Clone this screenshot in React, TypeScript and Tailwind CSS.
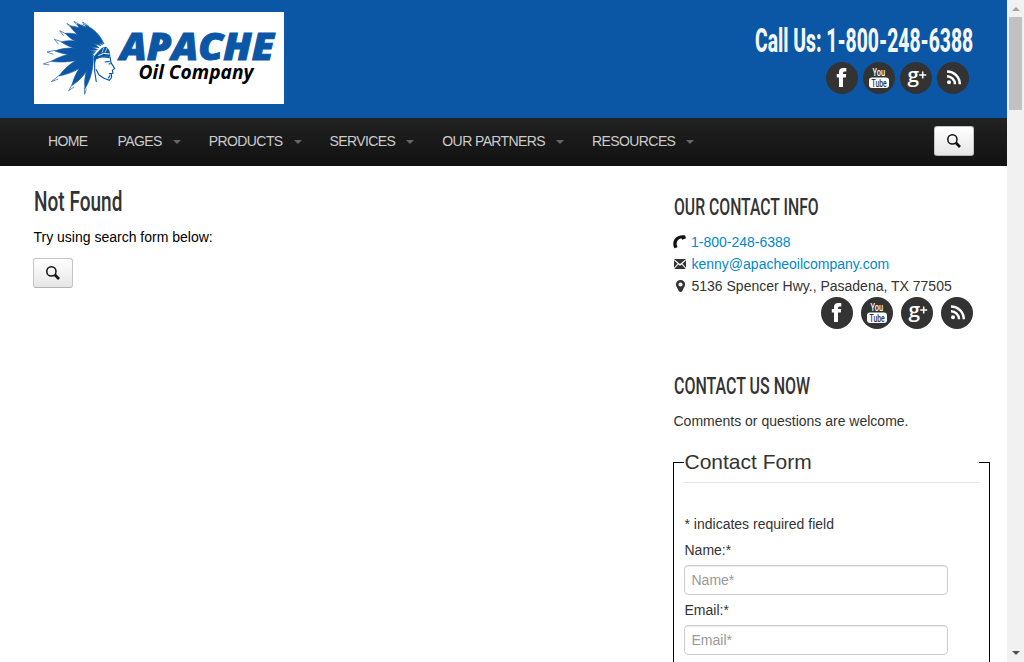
import React from "react";

const navItems = [
  { label: "HOME", menu: false },
  { label: "PAGES", menu: true },
  { label: "PRODUCTS", menu: true },
  { label: "SERVICES", menu: true },
  { label: "OUR PARTNERS", menu: true },
  { label: "RESOURCES", menu: true },
];

function Logo() {
  return (
    <svg className="block h-[92px] w-[250px] bg-white" viewBox="0 0 250 92" role="img" aria-label="Apache Oil Company">
      <g transform="translate(-4 -4) scale(.33333)" fill="#0b57a5">
        <g stroke="#0b57a5" strokeWidth="2">
          <path d="M222 108C211 82 190 60 164 50C176 72 198 94 222 108Z" />
          <path d="M218 110C197 75 170 53 141 48C153 74 186 98 218 110Z" />
          <path d="M213 113C181 74 153 55 120 54C135 80 173 104 213 113Z" />
          <path d="M207 119C171 86 139 73 106 76C124 99 165 118 207 119Z" />
          <path d="M203 126C163 101 125 92 94 102C120 121 164 131 203 126Z" />
          <path d="M198 132C151 119 108 115 75 129C109 143 157 145 198 132Z" />
          <path d="M194 137C147 129 99 138 64 160C105 166 157 158 194 137Z" />
          <path d="M191 142C149 145 112 169 87 204C129 196 169 175 191 142Z" />
          <path d="M190 145C159 160 134 194 126 232C157 214 180 181 190 145Z" />
          <path d="M190 150C171 178 160 207 165 242C181 216 190 183 190 150Z" />
        </g>
        <path d="M191 146C216 118 222 112 232 119C239 125 241 135 241 145L236 147C221 143 210 145 199 153L193 170Z" />
        <g fill="none" stroke="#0b57a5" strokeWidth="2">
          <path d="M162 52L158 42L177 55M140 50L132 40L149 50M121 56L110 46L126 56M107 77L89 68L101 83M95 101L73 94L86 109M76 127L51 132L70 139M65 159L40 168L58 171M89 201L64 221L85 213M127 228L116 248L132 237M163 239L164 259L169 242" />
          <path d="M240 146L243 164L254 181L247 187L249 195L244 198L245 208L238 217L222 211L207 201L198 184M194 151L194 190L199 222M237 197L247 197M224 162L239 160M236 168L242 167M241 202L234 211" strokeWidth="3.4" />
          <path d="M199 153Q208 142 239 149" strokeWidth="4" />
        </g>
        <g fill="none" stroke="#fff" strokeWidth="3">
          <path d="M191 141Q213 112 231 112M205 143Q219 132 239 138" />
          <path d="M216 134L222 118M225 134L231 120" strokeWidth="2" />
        </g>
      </g>
      <text x="86" y="48" textLength="154" lengthAdjust="spacingAndGlyphs" fontFamily="'Open Sans', sans-serif" fontSize="37" fontWeight="800" fontStyle="italic" fill="#0b57a5" stroke="#0b57a5" strokeWidth="1">APACHE</text>
      <text x="104.5" y="66.5" textLength="115" lengthAdjust="spacingAndGlyphs" fontFamily="'Open Sans', sans-serif" fontSize="20" fontWeight="700" fontStyle="italic" fill="#000">Oil Company</text>
    </svg>
  );
}

function Facebook() {
  return (
    <svg className="size-8" viewBox="0 0 32 32" aria-label="Facebook">
      <circle cx="16" cy="16" r="16" fill="#333" />
      <path fill="#fff" d="M13 25V15.5H10.8V12H13V10Q13 6 17.3 6H20.3V9.5H18.3Q17 9.5 17 11V12H20.2L19.8 15.5H17V25Z" />
    </svg>
  );
}

function YouTube() {
  return (
    <svg className="size-8 overflow-visible" viewBox="0 0 32 32" aria-label="YouTube">
      <circle cx="16" cy="16" r="16" fill="#333" />
      <text x="9.5" y="13.6" textLength="12.5" lengthAdjust="spacingAndGlyphs" fontFamily="Roboto, sans-serif" fontSize="10" fontWeight="500" fill="#fff">You</text>
      <rect x="6" y="15.5" width="20" height="10.5" rx="3" fill="#fff" />
      <text x="8.5" y="24.7" textLength="15.2" lengthAdjust="spacingAndGlyphs" fontFamily="Roboto, sans-serif" fontSize="10.5" fontWeight="500" fill="#333">Tube</text>
    </svg>
  );
}

function GooglePlus() {
  return (
    <svg className="size-8 overflow-visible" viewBox="0 0 32 32" aria-label="Google Plus">
      <circle cx="16" cy="16" r="16" fill="#333" />
      <text x="7.5" y="19.5" textLength="11.5" lengthAdjust="spacingAndGlyphs" fontFamily="'Open Sans', sans-serif" fontSize="19.5" fontWeight="600" fill="#fff">g</text>
      <path d="M22.7 9.5V16.5M19.2 13H26.2" stroke="#fff" strokeWidth="1.5" />
    </svg>
  );
}

function Rss() {
  return (
    <svg className="size-8" viewBox="0 0 32 32" aria-label="RSS">
      <circle cx="16" cy="16" r="16" fill="#333" />
      <circle cx="12" cy="20.2" r="2" fill="#fff" />
      <path d="M10 14.2A8 8 0 0 1 18 22.2M10 9.4A12.8 12.8 0 0 1 22.8 22.2" fill="none" stroke="#fff" strokeWidth="2.5" />
    </svg>
  );
}

function Social({ className }: { className: string }) {
  return (
    <div className={"flex justify-end " + className}>
      <Facebook />
      <YouTube />
      <GooglePlus />
      <Rss />
    </div>
  );
}

function SearchButton() {
  return (
    <button aria-label="Search" className="flex h-[30px] w-10 items-center justify-center rounded-[3px] border border-[#c5c5c5] border-b-[#b3b3b3] bg-linear-to-b from-white to-[#e6e6e6]">
      <svg className="size-[14px]" viewBox="0 0 14 14" fill="none" stroke="#111">
        <circle cx="5.4" cy="5.4" r="4.6" strokeWidth="1.5" />
        <path d="M8.8 8.8L13 13" strokeWidth="2.7" />
      </svg>
    </button>
  );
}

function Field({ label, hint }: { label: string; hint: string }) {
  return (
    <label className="mb-[5px] block">
      <span className="mb-[5px] block pl-[0.5px]">{label}</span>
      <input placeholder={hint} className="block h-[30px] w-[264px] rounded border border-[#ccc] px-[6.5px] text-sm shadow-[inset_0_1px_1px_rgba(0,0,0,.075)] placeholder:text-[#999]" />
    </label>
  );
}

export default function App() {
  return (
    <div className="flex h-[662px] w-full overflow-hidden bg-white font-['Liberation_Sans',Arial,sans-serif] text-sm leading-5 text-[#333]">
      <div className="w-[1007px] shrink-0">
        <header className="flex h-[118px] justify-between bg-[#0b57a5] pt-3 pr-[33px] pl-[34px]">
          <Logo />
          <div className="flex flex-col items-end">
            <div className="flex h-[50px] w-[219px] items-center pt-[6px]">
              <span className="block origin-left scale-x-[0.568] font-[Roboto] text-[34px] leading-[50px] font-extrabold whitespace-nowrap text-[#f5f5f5]">Call Us: 1-800-248-6388</span>
            </div>
            <Social className="gap-[5px] pr-[5px]" />
          </div>
        </header>
        <nav className="flex h-12 items-center justify-between bg-linear-to-b from-[#222] to-[#111] pr-[33px] pb-[2px] pl-[33px]">
          <ul className="flex text-[14px] tracking-[-0.6px] text-[#ccc]">
            {navItems.map((item) => (
              <li key={item.label} className="flex h-5 items-center px-[15px]">
                <span>{item.label}</span>
                {item.menu && <span className="mt-[2px] -mr-[2px] ml-[11px] border-x-4 border-t-4 border-x-transparent border-t-[#666]" />}
              </li>
            ))}
          </ul>
          <SearchButton />
        </nav>
        <div className="flex pl-[33px]">
          <main className="w-[640px] pt-4">
            <h1 className="flex h-10 items-center pl-px">
              <span className="origin-left scale-x-[0.68] font-[Roboto] text-[28px] font-medium whitespace-nowrap">Not Found</span>
            </h1>
            <p className="mt-[5px] mb-[11px] pl-[0.5px] text-black">Try using search form below:</p>
            <SearchButton />
          </main>
          <aside className="w-[317px] pt-5">
            <h2 className="flex h-10 items-center pt-[3px] pl-[0.5px]">
              <span className="origin-left scale-x-[0.685] font-[Roboto] text-[23px] font-medium whitespace-nowrap">OUR CONTACT INFO</span>
            </h2>
            <ul className="mt-[5px] leading-[22px]">
              <li className="flex items-center text-[#08c]">
                <svg className="mr-1 h-[14px] w-[14px] shrink-0" viewBox="0 0 14 14"><path fill="#111" d="M4.5 12.2L1.4 13.3C-.5 9.8 0 5.5 2.8 2.8C5.2.4 8.8-.3 12.2.5L13 3.3L9.3 4.7L8.2 3.3C5.3 3.7 3.4 6.4 3.6 9.2Z" /></svg>
                1-800-248-6388
              </li>
              <li className="flex items-center text-[#08c]">
                <svg className="mr-[4.5px] h-[14px] w-[14px] shrink-0" viewBox="0 0 14 14"><path fill="#333" d="M1 2H13L7 7ZM1 3.2L4.6 6.8L1 10.8ZM13 3.2L9.4 6.8L13 10.8ZM1.2 12L5.3 7.4L7 8.8L8.7 7.4L12.8 12Z" /></svg>
                kenny@apacheoilcompany.com
              </li>
              <li className="flex items-center">
                <svg className="mr-[4.5px] h-[14px] w-[14px] shrink-0" viewBox="0 0 14 14"><path fill="#333" fillRule="evenodd" d="M7.5 1A4.6 4.6 0 0 1 12.1 5.6C12.1 7.5 10.5 9 9.5 11.5Q7.5 14.5 5.5 11.5C4.5 9 2.9 7.5 2.9 5.6A4.6 4.6 0 0 1 7.5 1ZM7.5 3.4A2.1 2.1 0 1 0 7.5 7.6A2.1 2.1 0 1 0 7.5 3.4Z" /></svg>
                5136 Spencer Hwy., Pasadena, TX 77505
              </li>
            </ul>
            <Social className="gap-2 pr-[17px]" />
            <h2 className="mt-9 flex h-10 items-center pt-[3px] pl-[0.5px]">
              <span className="origin-left scale-x-[0.695] font-[Roboto] text-[23px] font-medium whitespace-nowrap">CONTACT US NOW</span>
            </h2>
            <p className="mt-[6px] mb-[11px] pl-[0.5px]">Comments or questions are welcome.</p>
            <fieldset className="h-[400px] border border-black px-[10px]">
              <legend className="mb-[31px] block w-full border-b border-[#e5e5e5] pl-[0.5px] text-[21px] leading-10">Contact Form</legend>
              <p className="mb-[6px] pl-[0.5px]">* indicates required field</p>
              <Field label="Name:*" hint="Name*" />
              <Field label="Email:*" hint="Email*" />
            </fieldset>
          </aside>
        </div>
      </div>
      <div className="flex w-[17px] shrink-0 flex-col items-center justify-between bg-[#f1f1f1]">
        <div className="flex flex-col items-center">
          <span className="mt-[7px] mb-[6px] border-x-4 border-b-4 border-x-transparent border-b-[#a3a3a3]" />
          <div className="h-[93px] w-[13px] bg-[#c1c1c1]" />
        </div>
        <span className="mb-[7px] border-x-4 border-t-4 border-x-transparent border-t-[#505050]" />
      </div>
    </div>
  );
}
